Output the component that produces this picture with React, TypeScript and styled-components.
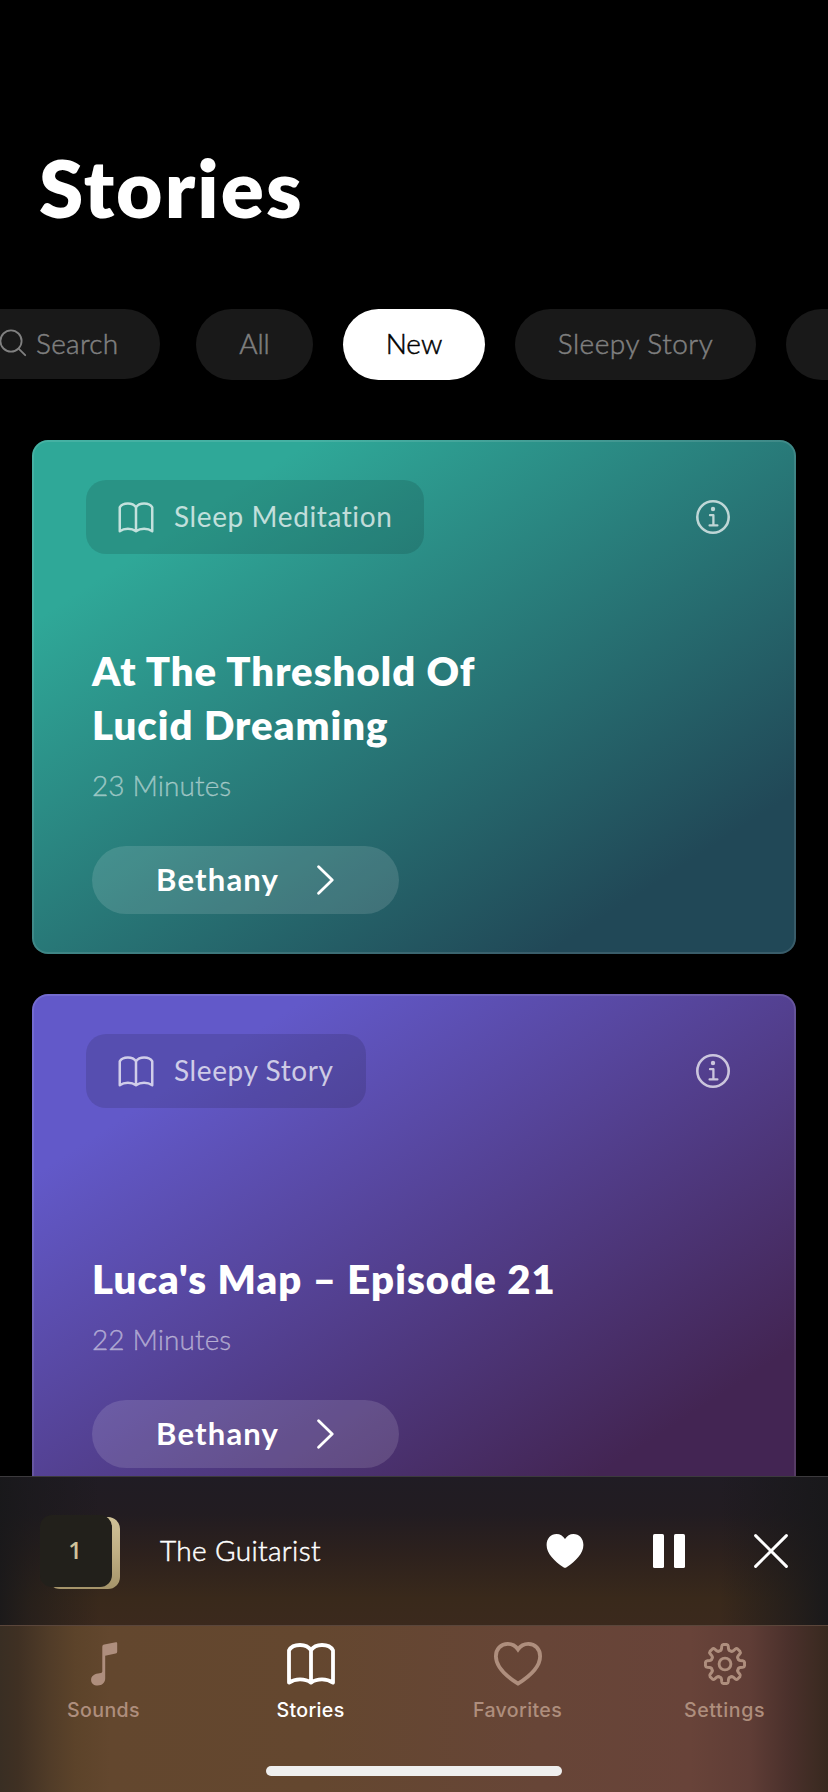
import React from "react";
import styled, { createGlobalStyle } from "styled-components";

const GlobalStyle = createGlobalStyle`
  * { box-sizing: border-box; }
  html, body { margin: 0; padding: 0; background: #000; }
  body { font-family: Lato, "Open Sans", sans-serif; color: #fff; }
`;

const Screen = styled.div`
  position: relative;
  width: 828px;
  height: 1792px;
  overflow: hidden;
  background: #000;
`;

const PageTitle = styled.h1`
  margin: 0;
  padding: 147px 0 0 39px;
  font-size: 80px;
  line-height: 80px;
  font-weight: 800;
  letter-spacing: 2.1px;
`;

const Filters = styled.nav`
  display: flex;
  align-items: flex-start;
  gap: 30px;
  margin-top: 82px;
  margin-left: -48px;
  width: 960px;
`;

const Chip = styled.button<{ $width: number; $active?: boolean; $track?: number }>`
  flex: none;
  display: flex;
  align-items: center;
  justify-content: center;
  width: ${(p) => p.$width}px;
  height: 71px;
  padding: 0 0 3px;
  border: 0;
  border-radius: 36px;
  background: ${(p) => (p.$active ? "#fff" : "#191919")};
  color: ${(p) => (p.$active ? "#000" : "#808080")};
  font: 300 28px/36px Lato, sans-serif;
  letter-spacing: ${(p) => p.$track ?? 0}px;
  -webkit-text-stroke: 0.5px currentColor;
  white-space: nowrap;
`;

const SearchChip = styled(Chip)`
  height: 70px;
  margin-right: 6px;
  justify-content: flex-start;
  padding: 0 0 2px 47px;
  gap: 9px;
`;

const CardList = styled.main`
  display: flex;
  flex-direction: column;
  gap: 40px;
  padding: 60px 32px 0;
`;

const Card = styled.article<{ $from: string; $to: string }>`
  display: flex;
  flex-direction: column;
  height: 514px;
  padding: 40px 60px;
  border-radius: 16px;
  background: linear-gradient(147deg, ${(p) => p.$from} 18%, ${(p) => p.$to} 84%);
  box-shadow: inset 0 0 0 2px rgba(255, 255, 255, 0.11);
`;

const CardTop = styled.header`
  display: flex;
  align-items: center;
  justify-content: space-between;
  margin: 0 6px 0 -6px;
`;

const Tag = styled.div<{ $width: number; $track: number }>`
  display: flex;
  align-items: center;
  gap: 20px;
  width: ${(p) => p.$width}px;
  height: 74px;
  padding-left: 32px;
  border-radius: 20px;
  background: rgba(0, 0, 0, 0.12);
  color: rgba(255, 255, 255, 0.72);
  font-size: 28px;
  letter-spacing: ${(p) => p.$track}px;
  white-space: nowrap;
`;

const TagText = styled.span`
  padding-bottom: 2px;
`;

const StoryTitle = styled.h2<{ $track: number }>`
  margin: auto 0 0;
  font-size: 40px;
  line-height: 54px;
  font-weight: 800;
  letter-spacing: ${(p) => p.$track}px;
  white-space: pre-line;
`;

const Duration = styled.p`
  margin: 13px 0 0;
  font-size: 28px;
  line-height: 40px;
  font-weight: 300;
  letter-spacing: 0.1px;
  color: rgba(255, 255, 255, 0.45);
  -webkit-text-stroke: 0.4px currentColor;
`;

const Narrator = styled.button`
  display: flex;
  align-items: center;
  gap: 38px;
  width: 307px;
  height: 68px;
  margin-top: 41px;
  padding: 0 0 0 64px;
  border: 0;
  border-radius: 34px;
  background: rgba(255, 255, 255, 0.13);
  color: #fff;
  font: 700 31px/40px Lato, sans-serif;
  letter-spacing: 1.2px;
`;

const NarratorName = styled.span`
  width: 123px;
  padding-bottom: 3px;
  text-align: left;
`;

const Dock = styled.footer`
  position: absolute;
  left: 0;
  right: 0;
  bottom: 0;
`;

const Player = styled.section`
  display: flex;
  align-items: center;
  height: 149px;
  padding: 0 40px 0 40px;
  border-top: 1px solid #3c3a3d;
  background:
    linear-gradient(90deg, rgba(24, 24, 26, 0.9) 0, rgba(24, 24, 26, 0.55) 30px, rgba(24, 24, 26, 0) 100px,
      rgba(24, 24, 26, 0) 720px, rgba(24, 24, 26, 0.6) 790px, rgba(24, 24, 26, 0.95) 828px),
    linear-gradient(180deg, #201c24 0, #221c21 25%, #2d211d 52%, #39291b 82%, #3b291d 100%);
`;

const Badge = styled.div`
  position: relative;
  width: 80px;
  height: 72px;
  margin-top: 3px;
`;

const BadgeBack = styled.div`
  position: absolute;
  inset: 0 0 0 8px;
  border-radius: 12px;
  background: linear-gradient(180deg, #d0c298 0, #bfae83 50%, #a5946a 100%);
`;

const BadgeFront = styled.div`
  position: absolute;
  inset: -2px 8px 2px 0;
  display: flex;
  align-items: center;
  justify-content: center;
  padding: 0 2px 1px 0;
  border-radius: 12px;
  background: #22201b;
  color: #cfc39a;
  font: 600 24px/32px "Open Sans", sans-serif;
`;

const TrackName = styled.div`
  flex: 1;
  padding: 0 0 2px 40px;
  font-size: 28px;
  font-weight: 300;
  letter-spacing: 0.35px;
  -webkit-text-stroke: 0.5px currentColor;
`;

const Controls = styled.div`
  display: flex;
  align-items: center;
  padding-bottom: 1px;
`;

const ControlIcon = styled.svg<{ $gap?: number }>`
  display: block;
  margin-left: ${(p) => p.$gap ?? 0}px;
`;

const TabBar = styled.nav`
  display: grid;
  grid-template-columns: repeat(4, 1fr);
  grid-template-rows: 140px 10px;
  height: 167px;
  border-top: 1px solid #5a463b;
  background: linear-gradient(90deg, #392e23 0, #3f3023 18px, #513c28 50px, #5c432a 75px, #63472e 110px,
    #64472f 310px, #674537 540px, #684339 690px, #5f3d36 750px, #4a302b 790px, #38291f 828px);
`;

const Tab = styled.button<{ $active?: boolean; $track: number }>`
  display: flex;
  flex-direction: column;
  align-items: center;
  gap: 12px;
  padding: 16px 0 0;
  border: 0;
  background: none;
  color: ${(p) => (p.$active ? "#fff" : "#ae8e7d")};
  font: 500 19.6px/24px Inter, sans-serif;
  letter-spacing: ${(p) => p.$track}px;
`;

const TabIcon = styled.span`
  display: flex;
  align-items: center;
  height: 44px;
`;

const HomeIndicator = styled.div`
  grid-column: 1 / -1;
  justify-self: center;
  width: 296px;
  height: 10px;
  border-radius: 5px;
  background: #efefee;
`;

const BookIcon = ({ width, height, stroke }: { width: number; height: number; stroke: number }) => (
  <svg width={width} height={height} viewBox="0 0 48 42" fill="none" stroke="currentColor" strokeWidth={stroke} strokeLinejoin="round">
    <path d="M24 7.2C21.6 3.6 17.6 2 13 2C8.2 2 3.8 4 2 7.4V39.6C5.2 37.4 9 36.4 13 36.4C17.2 36.4 21 37.4 24 39.6C27 37.4 30.8 36.4 35 36.4C39 36.4 42.8 37.4 46 39.6V7.4C44.2 4 39.8 2 35 2C30.4 2 26.4 3.6 24 7.2ZM24 7.2V39.6" />
  </svg>
);

const InfoIcon = () => (
  <svg width="34" height="34" viewBox="0 0 34 34" fill="none" stroke="rgba(255,255,255,0.7)">
    <circle cx="17" cy="17" r="15.7" strokeWidth="2.6" />
    <circle cx="17" cy="9" r="2.2" fill="rgba(255,255,255,0.7)" stroke="none" />
    <path d="M14 15.2H17.4V25.4M13.6 25.4H21.4" strokeWidth="2.3" strokeLinecap="round" strokeLinejoin="round" />
  </svg>
);

const SearchIcon = () => (
  <svg width="28" height="28" viewBox="0 0 28 28" fill="none" stroke="currentColor" strokeWidth="1.8" strokeLinecap="round">
    <circle cx="12" cy="12" r="10.6" />
    <path d="M19.6 19.6L26.2 26.2" />
  </svg>
);

const NoteIcon = () => (
  <svg width="28" height="44" viewBox="0 0 28 44" fill="currentColor">
    <path d="M12.3 5.2C12.3 3.6 12.9 2.9 14.3 2.6L25.8 0.3C26.8 0.1 27.2 0.5 27.2 1.4V9.6C27.2 10.8 26.7 11.4 25.6 11.6L15.2 13.8V36.6C15.2 40.8 12.1 43.6 7.6 43.6C3.8 43.6 1.1 41.4 1.1 38C1.1 34.4 3.7 32.2 8 31.5L10.8 31C11.9 30.8 12.3 30.3 12.3 29.2Z" />
  </svg>
);

const HeartOutline = () => (
  <svg width="48" height="44" viewBox="0 0 48 44" fill="none" stroke="currentColor" strokeWidth="3.8" strokeLinejoin="miter">
    <path d="M24 7.4C21.6 4 18 1.9 13.8 1.9C6.8 1.9 1.9 7.2 1.9 14.2C1.9 25 12.8 34.6 24 41.6C35.2 34.6 46.1 25 46.1 14.2C46.1 7.2 41.2 1.9 34.2 1.9C30 1.9 26.4 4 24 7.4Z" />
  </svg>
);

const polar = (radius: number, degrees: number) => {
  const a = (degrees * Math.PI) / 180;
  return `${(21 + radius * Math.sin(a)).toFixed(2)} ${(21 - radius * Math.cos(a)).toFixed(2)}`;
};

const gearPath =
  Array.from({ length: 8 }, (_, i) => {
    const c = i * 45;
    return `${i ? "L" : "M"}${polar(15.6, c - 13)}L${polar(18, c - 10.5)}Q${polar(19.6, c - 9)} ${polar(19.6, c - 5)}L${polar(19.6, c + 5)}Q${polar(19.6, c + 9)} ${polar(18, c + 10.5)}L${polar(15.6, c + 13)}Q${polar(13.2, c + 17)} ${polar(14.4, c + 22.5)}Q${polar(13.2, c + 28)} ${polar(15.6, c + 32)}`;
  }).join("") + "Z";

const GearIcon = () => (
  <svg width="42" height="42" viewBox="0 0 42 42" fill="none" stroke="currentColor" strokeWidth="2.9" strokeLinejoin="round">
    <path d={gearPath} />
    <circle cx="21" cy="21" r="5.9" />
  </svg>
);

interface Story {
  kind: string;
  tagWidth: number;
  tagTrack: number;
  title: string;
  titleTrack: number;
  minutes: number;
  narrator: string;
  from: string;
  to: string;
}

const stories: Story[] = [
  { kind: "Sleep Meditation", tagWidth: 338, tagTrack: 0.6, title: "At The Threshold Of\nLucid Dreaming", titleTrack: 1.05, minutes: 23, narrator: "Bethany", from: "#2fa898", to: "#214857" },
  { kind: "Sleepy Story", tagWidth: 280, tagTrack: 0.6, title: "Luca's Map – Episode 21", titleTrack: 1.1, minutes: 22, narrator: "Bethany", from: "#6259c9", to: "#432553" },
];

const StoryCard = ({ story }: { story: Story }) => (
  <Card $from={story.from} $to={story.to}>
    <CardTop>
      <Tag $width={story.tagWidth} $track={story.tagTrack}>
        <BookIcon width={36} height={31} stroke={3.4} />
        <TagText>{story.kind}</TagText>
      </Tag>
      <InfoIcon />
    </CardTop>
    <StoryTitle $track={story.titleTrack}>{story.title}</StoryTitle>
    <Duration>{story.minutes} Minutes</Duration>
    <Narrator>
      <NarratorName>{story.narrator}</NarratorName>
      <svg width="18" height="30" viewBox="0 0 18 30" fill="none" stroke="#fff" strokeWidth="2.8" strokeLinecap="round" strokeLinejoin="round">
        <path d="M1.6 1.8L15.2 15L1.6 28.2" />
      </svg>
    </Narrator>
  </Card>
);

export default function App() {
  return (
    <Screen>
      <GlobalStyle />
      <PageTitle>Stories</PageTitle>
      <Filters>
        <SearchChip $width={208} $track={0.3}>
          <SearchIcon />
          Search
        </SearchChip>
        <Chip $width={117}>All</Chip>
        <Chip $width={142} $active>New</Chip>
        <Chip $width={241} $track={0.5}>Sleepy Story</Chip>
        <Chip $width={120} />
      </Filters>
      <CardList>
        {stories.map((story) => (
          <StoryCard key={story.title} story={story} />
        ))}
      </CardList>
      <Dock>
        <Player>
          <Badge>
            <BadgeBack />
            <BadgeFront>1</BadgeFront>
          </Badge>
          <TrackName>The Guitarist</TrackName>
          <Controls>
            <ControlIcon width="38" height="34" viewBox="0 0 38 34" fill="#fff">
              <path d="M19 5C17 1.9 14 0 10.6 0C4.8 0 0.6 4.6 0.6 11C0.6 19.4 8.4 27.4 17.4 33.2C18.5 33.9 19.5 33.9 20.6 33.2C29.6 27.4 37.4 19.4 37.4 11C37.4 4.6 33.2 0 27.4 0C24 0 21 1.9 19 5Z" />
            </ControlIcon>
            <ControlIcon $gap={69} width="32" height="34" viewBox="0 0 32 34" fill="#fff">
              <rect width="11" height="34" rx="1.6" />
              <rect x="21" width="11" height="34" rx="1.6" />
            </ControlIcon>
            <ControlIcon $gap={69} width="34" height="34" viewBox="0 0 34 34" stroke="#fff" strokeWidth="3" strokeLinecap="round">
              <path d="M1.6 1.6L32.4 32.4M32.4 1.6L1.6 32.4" />
            </ControlIcon>
          </Controls>
        </Player>
        <TabBar>
          <Tab $track={0.35}>
            <TabIcon><NoteIcon /></TabIcon>
            Sounds
          </Tab>
          <Tab $active $track={0.35}>
            <TabIcon><BookIcon width={48} height={42} stroke={3.8} /></TabIcon>
            Stories
          </Tab>
          <Tab $track={0.35}>
            <TabIcon><HeartOutline /></TabIcon>
            Favorites
          </Tab>
          <Tab $track={0.6}>
            <TabIcon><GearIcon /></TabIcon>
            Settings
          </Tab>
          <HomeIndicator />
        </TabBar>
      </Dock>
    </Screen>
  );
}
